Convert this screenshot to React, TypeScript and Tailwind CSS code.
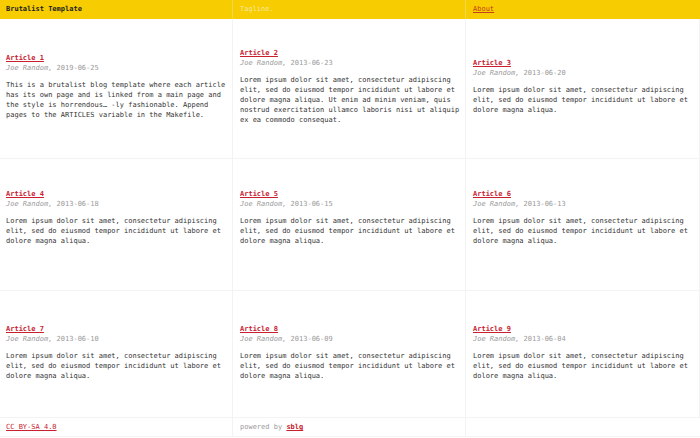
import React from "react";

interface Article {
  title: string;
  date: string;
  body: string;
}

const lorem =
  "Lorem ipsum dolor sit amet, consectetur adipiscing elit, sed do eiusmod tempor incididunt ut labore et dolore magna aliqua.";

const articles: Article[] = [
  {
    title: "Article 1",
    date: "2019-06-25",
    body: "This is a brutalist blog template where each article has its own page and is linked from a main page and the style is horrendous… -ly fashionable. Append pages to the ARTICLES variable in the Makefile.",
  },
  {
    title: "Article 2",
    date: "2013-06-23",
    body: lorem + " Ut enim ad minim veniam, quis nostrud exercitation ullamco laboris nisi ut aliquip ex ea commodo consequat.",
  },
  { title: "Article 3", date: "2013-06-20", body: lorem },
  { title: "Article 4", date: "2013-06-18", body: lorem },
  { title: "Article 5", date: "2013-06-15", body: lorem },
  { title: "Article 6", date: "2013-06-13", body: lorem },
  { title: "Article 7", date: "2013-06-10", body: lorem },
  { title: "Article 8", date: "2013-06-09", body: lorem },
  { title: "Article 9", date: "2013-06-04", body: lorem },
];

// second row sits a bit higher in the original
const ArticleCell: React.FC<{ article: Article; row: number; col: number }> = ({ article, row, col }) => (
  <div
    className={
      "flex flex-col justify-center border-r border-b border-[#f3f3f3] " +
      (row === 1 ? "pb-[14px] " : "pb-[4px] ") +
      (col === 0 ? "pl-[6px] pr-[6px]" : "pl-[7px] pr-[4px]")
    }
  >
    <a href="#" className="font-bold text-[#c8202f] underline leading-[10px]">
      {article.title}
    </a>
    <div className="italic text-[#9a9a9a] leading-[10px]">
      Joe Random, <span className="not-italic">{article.date}</span>
    </div>
    <p className="mt-[7px] text-[#333] leading-[10px]">{article.body}</p>
  </div>
);

export default function App() {
  return (
    <div
      className="w-[700px] h-[438px] bg-white text-[7px] overflow-hidden"
      style={{ fontFamily: '"DejaVu Sans Mono", monospace' }}
    >
      <header className="grid grid-cols-[233px_233px_234px] h-[19px] bg-[#f7cc00] leading-[19px]">
        <div className="px-[6px] font-bold text-[#222] border-r border-[#f0d64a]">
          Brutalist Template
        </div>
        <div className="pl-[7px] text-[#f3e7a0] border-r border-[#f0d64a]">Tagline.</div>
        <div className="pl-[7px]">
          <a href="#" className="text-[#c6401a] underline">
            About
          </a>
        </div>
      </header>
      <main className="grid grid-cols-[233px_233px_234px] grid-rows-[140px_132px_127px]">
        {articles.map((a, i) => (
          <ArticleCell key={a.title} article={a} row={Math.floor(i / 3)} col={i % 3} />
        ))}
      </main>
      <footer className="grid grid-cols-[233px_233px_234px] h-[19px] leading-[19px] border-b border-[#f3f3f3]">
        <div className="px-[6px] border-r border-[#f3f3f3]">
          <a href="#" className="text-[#c8202f] underline">
            CC BY-SA 4.0
          </a>
        </div>
        <div className="pl-[7px] text-[#9a9a9a] border-r border-[#f3f3f3]">
          powered by{" "}
          <a href="#" className="text-[#c8202f] underline font-bold">
            sblg
          </a>
        </div>
        <div />
      </footer>
    </div>
  );
}
